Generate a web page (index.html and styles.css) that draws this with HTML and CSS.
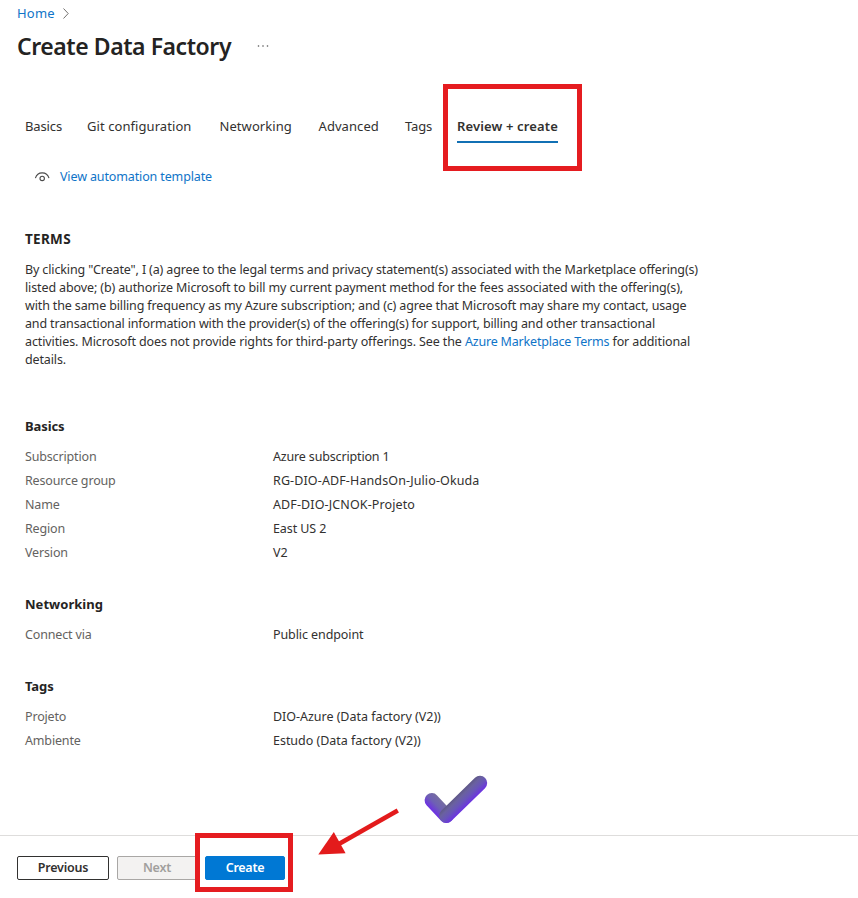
FILE: index.html
```html
<!DOCTYPE html>
<html lang="en">
<head>
<meta charset="utf-8">
<title>Create Data Factory</title>
<link rel="stylesheet" href="styles.css">
</head>
<body>
<div class="page">
  <header class="header">
    <nav class="crumbs">
      <a class="crumb" href="#">Home</a>
      <svg class="chevron" width="8" height="12" viewBox="0 0 8 12"><path d="M1.5 1.5 6.2 6.5 1.5 11.5" fill="none" stroke="#72706e" stroke-width="1"/></svg>
    </nav>
    <div class="title-row">
      <h1 class="title">Create Data Factory</h1>
      <svg class="more" width="12" height="4" viewBox="0 0 12 4" fill="#555"><circle cx="1.5" cy="2" r=".8"/><circle cx="6" cy="2" r=".8"/><circle cx="10.5" cy="2" r=".8"/></svg>
    </div>
  </header>

  <nav class="tabs">
    <span class="tab">Basics</span>
    <span class="tab tab-git">Git configuration</span>
    <span class="tab">Networking</span>
    <span class="tab">Advanced</span>
    <span class="tab">Tags</span>
    <span class="tab active">Review + create<i class="mark mark-tab"></i></span>
  </nav>

  <div class="toolbar">
    <svg class="eye" width="16" height="12" viewBox="0 0 16 12" fill="none" stroke="#4a4a4a" stroke-width="1.1"><path d="M1.4 7.2C2.4 3.8 5 1.9 8.2 1.9s5.8 1.9 6.8 5.3"/><circle cx="8.2" cy="7.4" r="2.2"/></svg>
    <a class="link" href="#">View automation template</a>
  </div>

  <main class="content">
    <h2 class="heading terms-heading">TERMS</h2>
    <p class="terms">
      <span class="line l1">By clicking "Create", I (a) agree to the legal terms and privacy statement(s) associated with the Marketplace offering(s)</span>
      <span class="line l2">listed above; (b) authorize Microsoft to bill my current payment method for the fees associated with the offering(s),</span>
      <span class="line l3">with the same billing frequency as my Azure subscription; and (c) agree that Microsoft may share my contact, usage</span>
      <span class="line l4">and transactional information with the provider(s) of the offering(s) for support, billing and other transactional</span>
      <span class="line l5">activities. Microsoft does not provide rights for third-party offerings. See the <a class="link terms-link" href="#">Azure Marketplace Terms</a> for additional</span>
      <span class="line">details.</span>
    </p>

    <section class="section">
      <h2 class="heading tight">Basics</h2>
      <dl class="list">
        <dt>Subscription</dt><dd class="snug">Azure subscription 1</dd>
        <dt>Resource group</dt><dd class="wide">RG-DIO-ADF-HandsOn-Julio-Okuda</dd>
        <dt>Name</dt><dd class="wide">ADF-DIO-JCNOK-Projeto</dd>
        <dt>Region</dt><dd>East US 2</dd>
        <dt>Version</dt><dd>V2</dd>
      </dl>
    </section>

    <section class="section">
      <h2 class="heading">Networking</h2>
      <dl class="list">
        <dt>Connect via</dt><dd>Public endpoint</dd>
      </dl>
    </section>

    <section class="section">
      <h2 class="heading tight">Tags</h2>
      <dl class="list">
        <dt>Projeto</dt><dd class="even">DIO-Azure (Data factory (V2))</dd>
        <dt>Ambiente</dt><dd class="even">Estudo (Data factory (V2))</dd>
      </dl>
    </section>
  </main>

  <footer class="footer">
    <button class="btn previous">Previous</button>
    <button class="btn next" disabled>Next</button>
    <div class="create-wrap"><button class="btn create">Create</button><i class="mark mark-create"></i></div>
  </footer>

  <svg class="arrow" width="90" height="60" viewBox="310 800 90 60">
    <path d="M397.8 810.5 338 844.5" stroke="#e31b1c" stroke-width="4.6"/>
    <path d="M318.3 854.6 333.8 832 345.6 853.2Z" fill="#e31b1c"/>
  </svg>
  <svg class="check" width="70" height="56" viewBox="420 770 70 56">
    <defs>
      <linearGradient id="tick" gradientUnits="userSpaceOnUse" x1="458.2" y1="794.3" x2="468" y2="804.4">
        <stop offset="0" stop-color="#5f5888"/><stop offset=".25" stop-color="#6a61a0"/><stop offset=".6" stop-color="#6855b8"/><stop offset="1" stop-color="#6c34e0"/>
      </linearGradient>
      <linearGradient id="tick-left" gradientUnits="userSpaceOnUse" x1="444" y1="803.2" x2="434" y2="812.6">
        <stop offset="0" stop-color="#756ca2"/><stop offset=".5" stop-color="#6e60b4"/><stop offset="1" stop-color="#6d32e2"/>
      </linearGradient>
    </defs>
    <g fill="none" stroke-width="14.4" stroke-linecap="round">
      <path d="M431.8 800.3 446.3 815.8" stroke="url(#tick-left)"/>
      <path d="M446.3 815.8 480 783" stroke="url(#tick)"/>
    </g>
  </svg>
</div>
</body>
</html>
```
FILE: styles.css
```css
* { box-sizing: border-box; }
body {
  margin: 0;
  background: #fff;
  color: #323130;
  font: 12.5px/18px "Noto Sans", "Open Sans", sans-serif;
  letter-spacing: -.13px;
}
a { color: #0f74c8; text-decoration: none; }
.page {
  position: relative;
  display: flex;
  flex-direction: column;
  width: 858px;
  height: 898px;
  overflow: hidden;
  white-space: nowrap;
}
.header { height: 105px; padding: 3px 17px 0; }
.crumbs { display: flex; align-items: center; gap: 7px; height: 20px; }
.crumb { font-size: 13px; letter-spacing: .2px; }
.title-row { display: flex; align-items: center; gap: 26px; height: 46px; }
.title { margin: 0; font-size: 23px; line-height: 32px; font-weight: 600; letter-spacing: -.44px; color: #242322; }

.tabs {
  display: grid;
  grid-template-columns: 62px 132.5px 99px 86.5px 52px 101px;
  grid-auto-rows: 38px;
  height: 38px;
  padding-left: 25px;
  font-size: 13px;
  line-height: 42px;
  letter-spacing: .07px;
}
.tab:first-child, .tab:nth-child(5) { letter-spacing: -.13px; }
.active { position: relative; border-bottom: 2px solid #1170b4; font-weight: 600; letter-spacing: .14px; }
.mark { position: absolute; border: 5px solid #e51c20; pointer-events: none; }
.mark-tab { left: -14px; top: -21px; width: 139px; height: 87px; }

.toolbar { display: flex; align-items: center; gap: 10px; height: 26px; margin-top: 21px; padding-left: 34px; }

.content { flex: 1; padding: 40px 25px 0; }
.heading { margin: 0; font-size: 13px; line-height: 18px; font-weight: 700; letter-spacing: .03px; color: #252423; }
.tight { letter-spacing: -.1px; }
.terms-heading { font-size: 13.5px; letter-spacing: .3px; }
.terms { margin: 13px 0 48px; }
.line { display: block; height: 18px; }
.l1 { letter-spacing: -.136px; }
.l2 { letter-spacing: -.121px; }
.l3 { letter-spacing: -.135px; }
.l4 { letter-spacing: -.147px; }
.l5 { letter-spacing: -.108px; }
.terms-link { letter-spacing: -.19px; }

.section { margin-bottom: 30px; }
.list { display: grid; grid-template-columns: 248px 1fr; grid-auto-rows: 24px; margin: 10px 0 0; line-height: 24px; }
.list dt { color: #646260; letter-spacing: -.16px; }
.list dd { margin: 0; letter-spacing: -.09px; }
.list .snug { letter-spacing: -.16px; }
.list .wide { letter-spacing: .12px; }
.list .even { letter-spacing: -.03px; }

.footer { display: flex; height: 63px; padding: 20px 17px 0; border-top: 1px solid #dedddc; }
.btn {
  height: 24px;
  padding: 0 0 1px;
  border: 1px solid #323130;
  border-radius: 2px;
  background: #fff;
  color: #323130;
  font: 600 12.5px/21px "Noto Sans", "Open Sans", sans-serif;
  letter-spacing: -.21px;
}
.previous { width: 92px; }
.next { width: 80px; margin-left: 8px; border-color: #a9a7a5; background: #f3f2f1; color: #a19f9d; }
.create-wrap { position: relative; margin-left: 8px; }
.create { width: 80px; border-color: #0078d4; background: #0078d4; color: #fff; letter-spacing: -.27px; }
.mark-create { left: -10px; top: -23px; width: 98px; height: 59px; }

.arrow { position: absolute; left: 310px; top: 800px; }
.check { position: absolute; left: 420px; top: 770px; }
```
